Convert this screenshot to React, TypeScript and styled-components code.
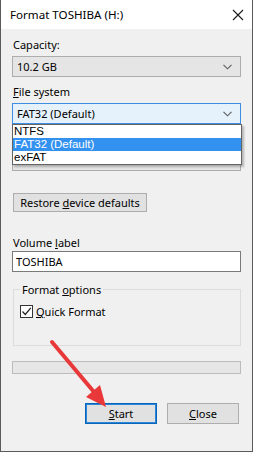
import styled, { createGlobalStyle } from "styled-components";

const GlobalStyle = createGlobalStyle`
  body {
    margin: 0;
    font-family: "Noto Sans", "Liberation Sans", sans-serif;
    font-size: 11px;
    color: #000;
    background: #f0f0f0;
  }
`;

function Chevron() {
  return (
    <svg width="9" height="6" viewBox="0 0 9 6">
      <path d="M0.5 0.8 L4.5 4.8 L8.5 0.8" fill="none" stroke="#5c5c5c" strokeWidth="1.1" />
    </svg>
  );
}

function App() {
  return (
    <>
      <GlobalStyle />
      <Window>
        <TitleBar>
          <span>Format TOSHIBA (H:)</span>
          <CloseX>
            <svg width="12" height="12" viewBox="0 0 12 12">
              <path d="M1 1 L11 11 M11 1 L1 11" stroke="#1a1a1a" strokeWidth="1.1" />
            </svg>
          </CloseX>
        </TitleBar>
        <Body>
          <Label $first>Capacity:</Label>
          <Combo>
            <span>10.2 GB</span>
            <Chevron />
          </Combo>

          <Label>
            <u>F</u>ile system
          </Label>
          <ComboWrap>
            <Combo $active>
              <span>FAT32 (Default)</span>
              <Chevron />
            </Combo>
            <DropList>
              <Option>NTFS</Option>
              <Option $selected>FAT32 (Default)</Option>
              <Option>exFAT</Option>
            </DropList>
          </ComboWrap>

          {/* allocation unit size row, covered by the open list */}
          <LabelSpace />
          <Combo />

          <RestoreButton>
            <span>
              Restore <u>d</u>evice defaults
            </span>
          </RestoreButton>

          <Label $gap={23}>
            Volume <u>l</u>abel
          </Label>
          <TextInput>TOSHIBA</TextInput>

          <Group>
            <Legend>
              Format <u>o</u>ptions
            </Legend>
            <CheckRow>
              <CheckBox>
                <svg width="11" height="11" viewBox="0 0 11 11">
                  <path d="M1.5 5.5 L4.3 8.5 L9.8 1.8" fill="none" stroke="#222" strokeWidth="1.2" />
                </svg>
              </CheckBox>
              <span>
                <u>Q</u>uick Format
              </span>
            </CheckRow>
          </Group>

          <Progress />

          <ButtonRow>
            <DialogButton $primary>
              <span>
                <u>S</u>tart
              </span>
            </DialogButton>
            <DialogButton>
              <span>
                <u>C</u>lose
              </span>
            </DialogButton>
          </ButtonRow>
        </Body>

        <Arrow width="253" height="452" viewBox="0 0 253 452">
          <line x1="52" y1="342" x2="94" y2="392" stroke="#e8383a" strokeWidth="4" strokeLinecap="round" />
          <polygon points="106,407 86,397 100,385" fill="#e8383a" />
        </Arrow>
      </Window>
    </>
  );
}

const Window = styled.div`
  position: relative;
  width: 253px;
  height: 452px;
  box-sizing: border-box;
  border-left: 1px solid #5a5a5a;
  border-right: 1px solid #5a5a5a;
  border-bottom: 1px solid #5a5a5a;
  background: #f0f0f0;
  display: flex;
  flex-direction: column;
  overflow: hidden;
`;

const TitleBar = styled.div`
  height: 29px;
  background: #fff;
  display: flex;
  align-items: center;
  justify-content: space-between;
  padding: 0 8px 0 9px;
  font-size: 11.6px;
  flex-shrink: 0;
`;

const CloseX = styled.div`
  display: flex;
  align-items: center;
  margin-top: 1px;
`;

const Body = styled.div`
  padding: 0 11px;
  display: flex;
  flex-direction: column;
`;

const Label = styled.div<{ $first?: boolean; $gap?: number }>`
  line-height: 15px;
  margin-top: ${(p) => (p.$first ? 8 : p.$gap ?? 7)}px;
  margin-bottom: 4px;
  padding-left: 1px;
`;

const LabelSpace = styled.div`
  height: 15px;
  margin: 7px 0 4px;
`;

const ComboWrap = styled.div`
  position: relative;
  z-index: 2;
`;

const Combo = styled.div<{ $active?: boolean }>`
  height: 21px;
  box-sizing: border-box;
  border: 1px solid ${(p) => (p.$active ? "#3d8ee0" : "#adadad")};
  background: ${(p) => (p.$active ? "#e5f1fb" : "#e5e5e5")};
  display: flex;
  align-items: center;
  justify-content: space-between;
  padding: 0 8px 0 4px;
  line-height: 15px;
`;

const DropList = styled.div`
  position: absolute;
  top: 100%;
  left: 0;
  right: -1px;
  background: #fff;
  border: 1px solid #646464;
  box-shadow: 2px 2px 2px rgba(0, 0, 0, 0.25);
`;

const Option = styled.div<{ $selected?: boolean }>`
  height: 13px;
  line-height: 13px;
  padding-left: 1px;
  font-family: "Liberation Sans", "Noto Sans", sans-serif;
  font-size: 11.5px;
  background: ${(p) => (p.$selected ? "#3391f0" : "#fff")};
  color: ${(p) => (p.$selected ? "#fff" : "#000")};
`;

const RestoreButton = styled.div`
  align-self: flex-start;
  margin: 22px 0 0 1px;
  width: 134px;
  height: 19px;
  box-sizing: border-box;
  border: 1px solid #adadad;
  background: #e1e1e1;
  display: flex;
  align-items: center;
  justify-content: center;
  line-height: 15px;
`;

const TextInput = styled.div`
  height: 21px;
  box-sizing: border-box;
  margin-top: -3px;
  border: 1px solid #7a7a7a;
  background: #fff;
  display: flex;
  align-items: center;
  padding-left: 3px;
  line-height: 15px;
`;

const Group = styled.fieldset`
  margin: 10px 0 0 1px;
  padding: 7px 6px 0 6px;
  height: 64px;
  box-sizing: border-box;
  border: 1px solid #dcdcdc;
  min-width: 0;
`;

const Legend = styled.legend`
  padding: 0 2px;
  margin-left: 0;
  line-height: 15px;
`;

const CheckRow = styled.div`
  display: flex;
  align-items: center;
  gap: 3px;
  line-height: 15px;
`;

const CheckBox = styled.div`
  width: 13px;
  height: 13px;
  box-sizing: border-box;
  border: 1px solid #333;
  background: #fff;
  display: flex;
  align-items: center;
  justify-content: center;
`;

const Progress = styled.div`
  margin-top: 15px;
  height: 13px;
  box-sizing: border-box;
  border: 1px solid #bcbcbc;
  background: #e6e6e6;
`;

const ButtonRow = styled.div`
  margin-top: 29px;
  display: flex;
  justify-content: flex-end;
  gap: 10px;
  padding-right: 2px;
`;

const DialogButton = styled.div<{ $primary?: boolean }>`
  width: 72px;
  height: 21px;
  box-sizing: border-box;
  border: 1px solid ${(p) => (p.$primary ? "#0a64b8" : "#adadad")};
  box-shadow: ${(p) => (p.$primary ? "inset 0 0 0 1px #2a86d8" : "none")};
  background: #e1e1e1;
  display: flex;
  align-items: center;
  justify-content: center;
  line-height: 15px;
`;

const Arrow = styled.svg`
  position: absolute;
  left: -1px;
  top: 0;
  pointer-events: none;
  z-index: 5;
`;

export default App;
